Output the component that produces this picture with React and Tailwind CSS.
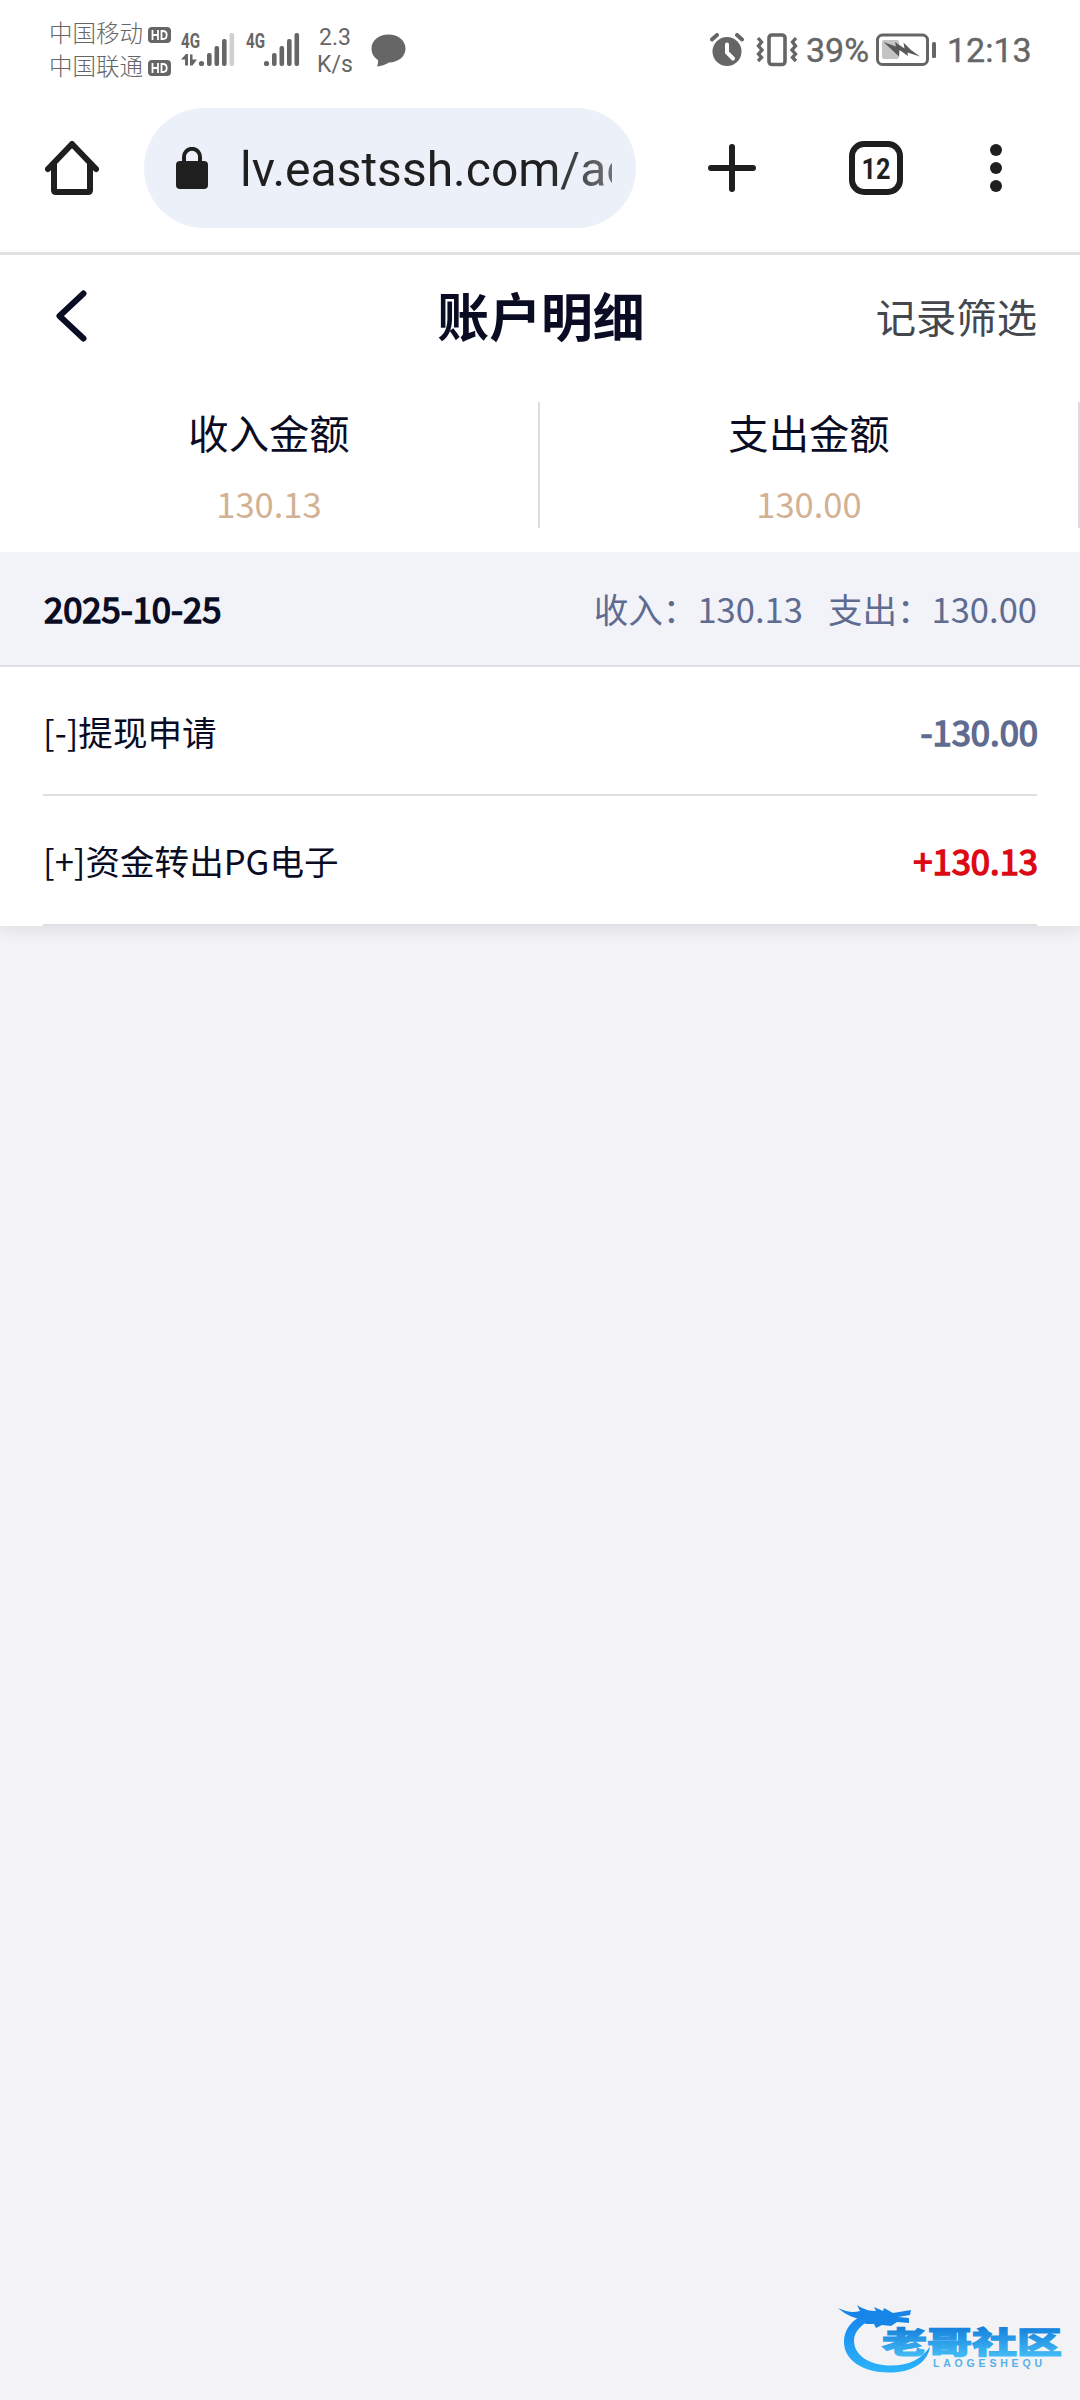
import React from 'react';

const days = [
  {
    date: '2025-10-25',
    income: '130.13',
    expense: '130.00',
    records: [
      { id: 1, title: '[-]提现申请', amount: '-130.00', type: 'out' },
      { id: 2, title: '[+]资金转出PG电子', amount: '+130.13', type: 'in' },
    ],
  },
];

const totals = [
  { label: '收入金额', value: '130.13' },
  { label: '支出金额', value: '130.00' },
];

const HdBadge = () => (
  <svg width="23" height="16" viewBox="0 0 23 16">
    <rect width="23" height="16" rx="4" fill="#666" />
    <path d="M4.500 3v10M10 3v10M4 8h6M13.500 4v8h1.500c2.600 0 3.700-1.500 3.700-4s-1.100-4-3.700-4z" stroke="#fff" strokeWidth="1.800" fill="none" />
  </svg>
);

const Signal = ({ data, weak }) => (
  <svg className="overflow-visible" width="54" height="34" viewBox="0 0 54 34" fill="#666">
    <text x="0" y="14.500" fontSize="20" fontWeight="700" textLength="19" lengthAdjust="spacingAndGlyphs" fontFamily="Roboto, sans-serif">4G</text>
    {data && <path d="M0 26.500 5 21h2v11.500H4v-6zM9 21.500h2.500v5H16L11.500 32.500H9z" />}
    <circle cx="20.500" cy="30.500" r="2.600" />
    <rect x="26" y="20" width="4.600" height="13" rx="2" />
    <rect x="33.500" y="13" width="4.600" height="20" rx="2" />
    <rect x="41" y="6" width="4.600" height="27" rx="2" />
    <rect x="48.500" y="0" width="4.600" height="33" rx="2" fill={weak ? '#d0d0d0' : '#666'} />
  </svg>
);

const StatusBar = () => (
  <div className="flex h-[100px] items-start justify-between pl-[49px] pr-[46px] font-[Roboto,'Noto_Sans_CJK_SC',sans-serif] text-[#666]">
    <div className="flex items-start">
      <div className="flex flex-col pt-[18px] text-[23.5px] leading-[33px]">
        <div className="flex items-center gap-[4px]">
          <span className="w-[95px] whitespace-nowrap font-light">中国移动</span>
          <HdBadge />
        </div>
        <div className="flex items-center gap-[4px]">
          <span className="w-[95px] whitespace-nowrap font-light">中国联通</span>
          <HdBadge />
        </div>
      </div>
      <div className="ml-[10px] flex gap-[11px] pt-[33px]">
        <Signal data weak />
        <Signal />
      </div>
      <div className="ml-[16px] w-[38px] pt-[24px] text-center text-[23px] leading-[27px]">
        <div>2.3</div>
        <div>K/s</div>
      </div>
      <svg className="mt-[34px] ml-[17px]" width="35" height="33" viewBox="0 0 35 33" fill="#666">
        <path d="M17.500 0.500C27 .5 34.500 6.500 34.500 14.500S27.500 28.300 18 28.500C14.500 30.500 10 32.300 6 32.500 6.800 30.500 7.300 28.300 7 26 3 23.500 .5 19.500 .5 14.500.5 6.500 8 .5 17.500.5z" />
      </svg>
    </div>

    <div className="flex items-center pt-[33px] text-[34px] leading-[34px]">
      <svg width="34" height="34" viewBox="0 0 34 34" fill="none">
        <circle cx="17" cy="18.500" r="14.500" fill="#666" />
        <path d="M2 6.500 7 2M27 2l5 4.500" stroke="#666" strokeWidth="4" strokeLinecap="round" />
        <path d="M17 11.500v8l6 6" stroke="#fff" strokeWidth="4" strokeLinecap="round" />
      </svg>
      <svg className="ml-[12px]" width="42" height="34" viewBox="0 0 42 34" fill="none" stroke="#666">
        <rect x="13" y="2" width="16" height="29.500" rx="3" strokeWidth="3.600" />
        <path d="M2 5l3.500 4L2.500 13l3.500 4-3.500 4 3 3.500L2 28M40 5l-3.500 4 3 4-3.500 4 3.500 4-3 3.500L40 28" strokeWidth="3.400" />
      </svg>
      <span className="ml-[8px] w-[63px] [-webkit-text-stroke:0.4px]">39%</span>
      <svg className="ml-[7px]" width="61" height="34" viewBox="0 0 61 34">
        <rect x="1.500" y="2" width="50" height="29.500" rx="5" fill="none" stroke="#666" strokeWidth="3" />
        <rect x="6" y="7" width="17" height="19" rx="2" fill="#c4c4c4" />
        <path d="M7.500 9 20 13.500 19 9l9.500 6.500L27.500 9.500 35 17l9 6.500L31.500 19.500l.5 3.500-8.500-6-.5 6.500z" fill="#595959" />
        <rect x="56" y="9" width="4" height="16" rx="1.500" fill="#666" />
      </svg>
      <span className="ml-[10px] w-[87px] whitespace-nowrap [-webkit-text-stroke:0.4px]">12:13</span>
    </div>
  </div>
);

const BrowserBar = () => (
  <div className="flex h-[155px] items-start border-b-[3px] border-[#e1e1e1] pt-2 text-[#1f1f1f]">
    <svg className="mt-[33px] ml-[45px]" width="54" height="54" viewBox="0 0 54 54" fill="none" stroke="currentColor" strokeWidth="6" strokeLinecap="round" strokeLinejoin="round">
      <path d="M3 28 27 3 51 28M9 23v26q0 2 2 2h32q2 0 2-2V23" />
    </svg>
    <div className="ml-[45px] flex h-[120px] w-[492px] items-center rounded-full bg-[#ecf0f9] pl-8">
      <svg width="32" height="42" viewBox="0 0 32 42">
        <rect y="14" width="32" height="28" rx="4" fill="currentColor" />
        <path d="M8 16V10a8 8.200 0 0 1 16 0v6" fill="none" stroke="currentColor" strokeWidth="4" />
      </svg>
      <div className="ml-[32px] w-[372px] overflow-hidden pt-1 font-[Roboto,sans-serif] text-[48px] leading-[60px] whitespace-nowrap [mask-image:linear-gradient(to_right,black_82%,rgba(0,0,0,0.6))]">
        lv.eastssh.com/ac
      </div>
    </div>
    <svg className="mt-[36px] ml-[72px]" width="48" height="48" viewBox="0 0 48 48" stroke="currentColor" strokeWidth="6" strokeLinecap="round">
      <path d="M24 3v42M3 24h42" />
    </svg>
    <svg className="mt-[33px] ml-[93px]" width="54" height="54" viewBox="0 0 54 54">
      <rect x="3" y="3" width="48" height="48" rx="12" fill="none" stroke="currentColor" strokeWidth="6" />
      <text x="12.500" y="38" fontSize="29.500" fontWeight="700" textLength="29" lengthAdjust="spacingAndGlyphs" fontFamily="Roboto, sans-serif" fill="currentColor">12</text>
    </svg>
    <svg className="mt-[36px] ml-[87px]" width="12" height="48" viewBox="0 0 12 48" fill="currentColor">
      <circle cx="6" cy="6" r="6" />
      <circle cx="6" cy="24" r="6" />
      <circle cx="6" cy="42" r="6" />
    </svg>
  </div>
);

const PageHeader = () => (
  <div className="grid h-[121px] grid-cols-3 items-center px-[43px]">
    <svg className="ml-[13px]" width="31" height="52" viewBox="0 0 31 52" fill="none" stroke="#0a0c24" strokeWidth="6" strokeLinecap="round" strokeLinejoin="round">
      <path d="M27.500 3.500 3.500 26l24 22.500" />
    </svg>
    <h1 className="pb-[2px] pl-[2px] text-center text-[51.840px] leading-[60px] font-bold">账户明细</h1>
    <button className="text-right text-[40.320px] leading-[60px] text-[#44474d]">记录筛选</button>
  </div>
);

const Summary = () => (
  <div className="grid grid-cols-2 pt-[26px] pb-6">
    {totals.map((item) => (
      <div key={item.label} className="flex h-[126px] flex-col items-center border-r-2 border-[#d9dce0]">
        <span className="text-[40.320px] leading-[60px]">{item.label}</span>
        <span className="mt-[16px] text-[34.560px] leading-[50px] text-[#d3b193]">{item.value}</span>
      </div>
    ))}
  </div>
);

const RecordRow = ({ record }) => (
  <div className="flex h-[129px] items-center justify-between border-b-2 border-[#e0e0e2] last:h-[130px]">
    <span>{record.title}</span>
    <span className={`-mr-px [-webkit-text-stroke:1.5px] ${record.type === 'in' ? 'text-[#dc0a14]' : 'text-[#5f6b90]'}`}>
      {record.amount}
    </span>
  </div>
);

const DayGroup = ({ day }) => (
  <div className="text-[34.560px] leading-[50px]">
    <div className="flex h-[115px] items-center justify-between border-b-2 border-[#dfe0e4] bg-[#f2f3f9] px-[43px] pb-[2px]">
      <span className="ml-px [-webkit-text-stroke:1.5px]">{day.date}</span>
      <div className="flex gap-[25px] text-[#5f6b90]">
        <span>收入：{day.income}</span>
        <span>支出：{day.expense}</span>
      </div>
    </div>
    <div className="px-[43px]">
      {day.records.map((record) => (
        <RecordRow key={record.id} record={record} />
      ))}
    </div>
  </div>
);

const CommunityLogo = () => (
  <svg className="absolute right-[14px] bottom-[24px] overflow-visible" width="226" height="74" viewBox="0 0 226 74">
    <defs>
      <linearGradient id="ring" x1="0" y1="0" x2="0" y2="1">
        <stop offset="0" stopColor="#1683ee" />
        <stop offset="1" stopColor="#2bb4fa" />
      </linearGradient>
      <linearGradient id="word" x1="0" y1="0" x2="0" y2="1">
        <stop offset="0.200" stopColor="#1580dc" />
        <stop offset="0.900" stopColor="#45bdf5" />
      </linearGradient>
    </defs>
    <path d="M30 11C13 15 4 27 4 40c0 18 19 31 46 30.500 22 0 38-10 40-26-8 12-20 19-39 19-21 0-37-10-37-25 0-9 8-18 22-22z" fill="url(#ring)" />
    <path d="M-2 6c9 4 15 5 22 3L17 3c7 5 14 6 19 6l-2-4 9 4 1-3 9 5 18-3-1 5-12 2 11 1 0 5-12-1-6 4-9-1-6 3-2-4-9 0 2-4C14 17 6 13 -2 6z" fill="#1785e8" />
    <text x="42" y="51" fontSize="30" textLength="180" lengthAdjust="spacingAndGlyphs" fontFamily="'Noto Sans CJK SC', sans-serif" fontWeight="900" fill="url(#word)" stroke="url(#word)" strokeWidth="1.200">老哥社区</text>
    <text x="93" y="64.500" fontSize="10.500" fontWeight="700" textLength="109" lengthAdjust="spacing" fontFamily="'Liberation Sans', sans-serif" fill="#58b0ea">LAOGESHEQU</text>
  </svg>
);

export default function App() {
  return (
    <div className="relative h-[2400px] w-[1080px] overflow-hidden bg-[#f3f3f6] font-['Noto_Sans_CJK_SC',sans-serif] text-[#0a0c24]">
      <div className="bg-white shadow-[0_6px_14px_rgba(0,0,30,0.07)]">
        <StatusBar />
        <BrowserBar />
        <PageHeader />
        <Summary />
        {days.map((day) => (
          <DayGroup key={day.date} day={day} />
        ))}
      </div>
      <CommunityLogo />
    </div>
  );
}
